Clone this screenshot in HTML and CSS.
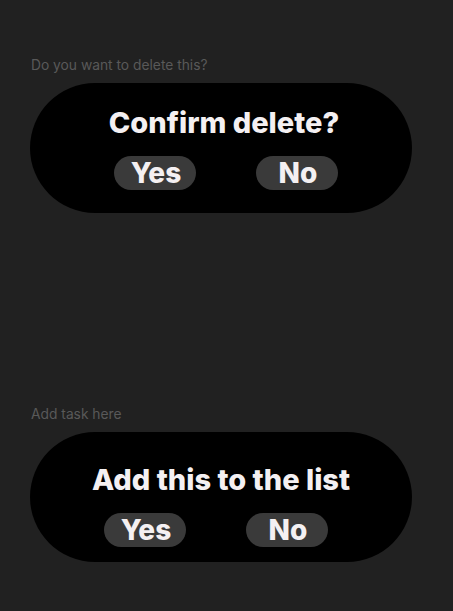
FILE: index.html
```html
<!DOCTYPE html>
<html>
<head>
<meta charset="utf-8">
<link rel="stylesheet" href="styles.css">
</head>
<body>
<section class="block block-first">
  <p class="label">Do you want to delete this?</p>
  <div class="card card-delete">
    <h2 class="title">Confirm delete?</h2>
    <div class="actions">
      <button class="btn">Yes</button>
      <button class="btn">No</button>
    </div>
  </div>
</section>
<section class="block block-second">
  <p class="label">Add task here</p>
  <div class="card card-add">
    <h2 class="title">Add this to the list</h2>
    <div class="actions">
      <button class="btn">Yes</button>
      <button class="btn">No</button>
    </div>
  </div>
</section>
</body>
</html>
```
FILE: styles.css
```css
html, body {
  margin: 0;
  padding: 0;
  background: #212121;
}
body {
  width: 453px;
  height: 611px;
  padding: 0 41px 0 30px;
  box-sizing: border-box;
  font-family: Inter, "Noto Sans", sans-serif;
  overflow: hidden;
}
.block {
  display: flex;
  flex-direction: column;
}
.block-first {
  padding-top: 57px;
}
.block-second {
  padding-top: 193px;
}
.label {
  margin: 0 0 9px 1px;
  font-size: 13.8px;
  line-height: 17px;
  color: #595959;
}
.card {
  height: 130px;
  box-sizing: border-box;
  border-radius: 65px;
  background: #000;
  display: flex;
  flex-direction: column;
  align-items: center;
}
.card-delete {
  padding-top: 23px;
}
.card-add {
  padding-top: 31px;
}
.title {
  margin: 0;
  font-size: 29px;
  line-height: 34px;
  font-weight: 800;
  color: #f4f0f2;
}
.card-delete .title {
  margin-left: 6px;
}
.actions {
  display: flex;
  gap: 60px;
  margin-top: 16px;
}
.card-delete .actions {
  margin-left: 9px;
}
.card-add .actions {
  margin-top: 16px;
  margin-right: 11px;
}
.btn {
  width: 82px;
  height: 34px;
  border: none;
  border-radius: 17px;
  background: #3a3a3a;
  color: #f4f0f2;
  font-family: Inter, "Noto Sans", sans-serif;
  font-size: 28px;
  font-weight: 800;
  line-height: 34px;
  padding: 0 0 0 3px;
}
```
